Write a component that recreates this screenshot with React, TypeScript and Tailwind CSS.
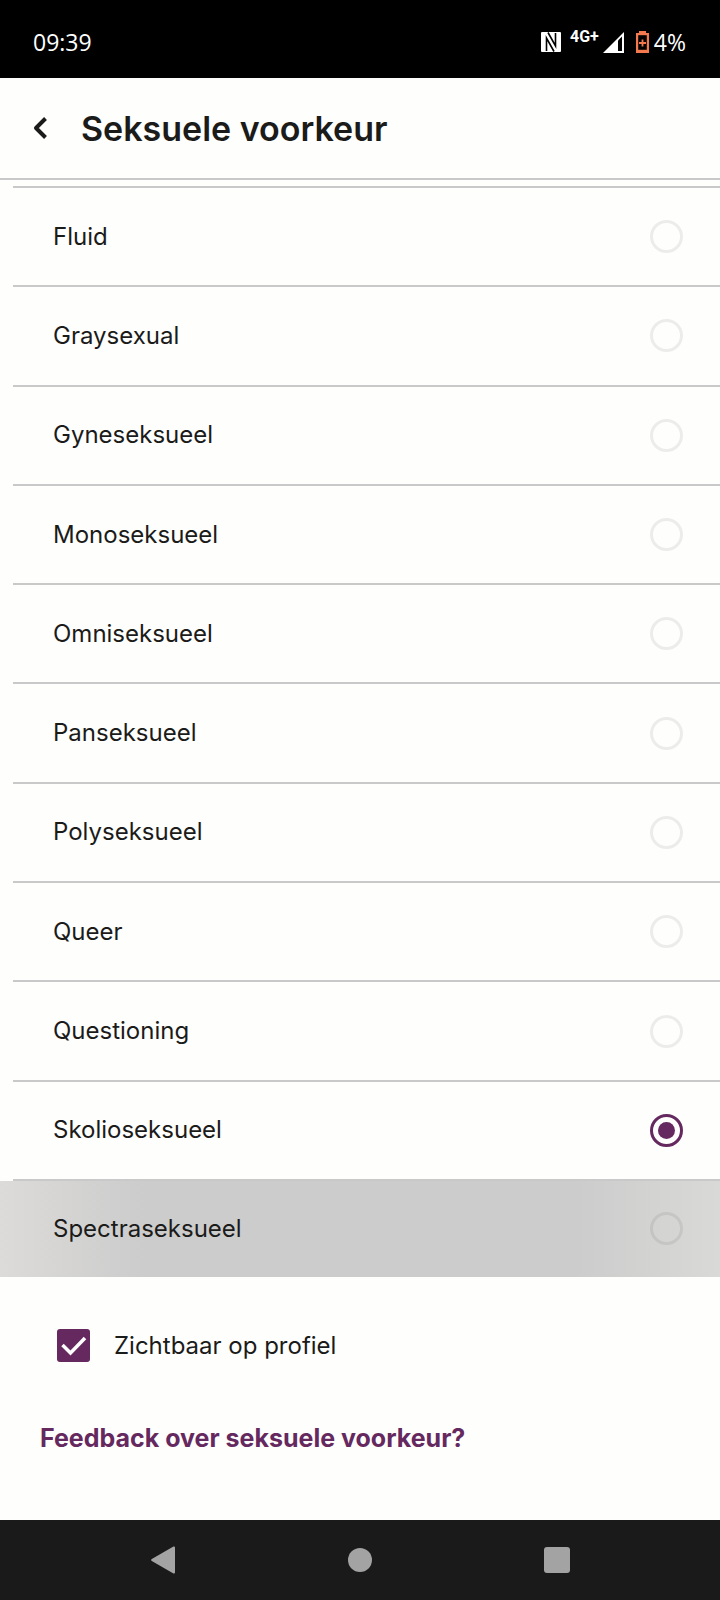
import { useState } from "react";

const options = [
  "Fluid",
  "Graysexual",
  "Gyneseksueel",
  "Monoseksueel",
  "Omniseksueel",
  "Panseksueel",
  "Polyseksueel",
  "Queer",
  "Questioning",
  "Skolioseksueel",
  "Spectraseksueel",
];

// row that still shows the touch ripple
const pressed = "Spectraseksueel";

function StatusBar() {
  return (
    <div className="h-[78px] shrink-0 bg-black text-white flex items-center justify-between pl-[33px] pr-[34px] pt-[6px] font-['Open_Sans',sans-serif] text-[23px] leading-8">
      <time>09:39</time>
      <div className="flex items-center">
        <svg className="w-5 h-5" viewBox="0 0 20 20" role="img" aria-label="NFC">
          <rect width="20" height="20" rx="1" fill="#fff" />
          <path d="M5.500 19V6l7.500 13.500M14.500 1v13L7 .5" fill="none" stroke="#000" strokeWidth="1.600" />
        </svg>
        <span className="ml-[9px] mb-[10px] font-[Roboto,sans-serif] text-base leading-5 font-bold">4G+</span>
        <svg className="ml-1 w-[21px] h-[21px]" viewBox="0 0 21 21" role="img" aria-label="Signal">
          <path d="M0 21L21 0v21z" fill="#fff" />
          <path d="M15 8.500l4-4V19h-4z" fill="#000" />
        </svg>
        <svg className="ml-3 w-[13px] h-[22px]" viewBox="0 0 13 22" role="img" aria-label="Battery low">
          <path d="M3 0h7v2h3v20H0V2h3z" fill="#f4794f" />
          <path d="M2.200 4.200h8.600v14.600H2.200z" fill="#000" />
          <path d="M5.600 8.500h1.800v2.600H10v1.800H7.400v2.600H5.600v-2.600H3v-1.800h2.600z" fill="#f4794f" />
        </svg>
        <span className="ml-[5px]">4%</span>
      </div>
    </div>
  );
}

function NavBar() {
  return (
    <nav className="h-20 shrink-0 bg-[#1a1a1a] px-16 flex items-center justify-around text-[#a3a3a3]">
      <button type="button" aria-label="Terug" className="size-12 grid place-items-center">
        <svg className="w-6 h-7" viewBox="0 0 24 28" fill="currentColor">
          <path d="M22 .7c1-.6 2 0 2 1v24.600c0 1-1 1.600-2 1L.8 15c-.9-.5-.9-1.500 0-2z" />
        </svg>
      </button>
      <button type="button" aria-label="Startscherm" className="size-12 grid place-items-center">
        <span className="size-6 rounded-full bg-current" />
      </button>
      <button type="button" aria-label="Overzicht" className="size-12 grid place-items-center">
        <span className="size-[26px] rounded-[3px] bg-current" />
      </button>
    </nav>
  );
}

export default function App() {
  const [selected, setSelected] = useState("Skolioseksueel");
  const [visible, setVisible] = useState(true);

  return (
    <div className="min-h-screen flex flex-col bg-[#fefefd] text-[#1b1b1a] font-[Inter,sans-serif] text-2xl">
      <StatusBar />

      <header className="h-[102px] shrink-0 border-b-2 border-[#c9c9c9] flex items-center pl-[33px]">
        <button type="button" aria-label="Terug">
          <svg className="w-4 h-[22px]" viewBox="0 0 16 22" fill="none" stroke="currentColor" strokeWidth="4">
            <path d="M12.500 1.500L3 11l9.500 9.500" strokeLinejoin="round" />
          </svg>
        </button>
        <h1 className="ml-8 pt-[2px] text-[34px] leading-10 font-semibold">Seksuele voorkeur</h1>
      </header>

      <main className="flex-1 flex flex-col">
        <ul className="flex-1 flex flex-col pt-[6px]" role="radiogroup" aria-label="Seksuele voorkeur">
          {options.map((option) => (
            <li key={option} className="flex-1 last:flex-none min-h-[98px] flex flex-col">
              <div className="h-[2px] shrink-0 bg-[#c9c9c9] ml-[13px]" />
              <label
                className={`flex-1 flex items-center justify-between pl-[53px] pr-[37px] ${
                  option === pressed
                    ? "bg-[linear-gradient(to_right,#dcdbd9,#cccccc_20%,#cccccc_80%,#d9d9d7)]"
                    : ""
                }`}
              >
                {option}
                <input
                  type="radio"
                  name="voorkeur"
                  checked={selected === option}
                  onChange={() => setSelected(option)}
                  className="appearance-none size-[33px] shrink-0 rounded-full border-[3px] border-black/7 grid place-content-center checked:border-[#65295f] before:content-[''] before:size-[17px] before:rounded-full checked:before:bg-[#65295f]"
                />
              </label>
            </li>
          ))}
        </ul>

        <div className="shrink-0 h-[243px] pt-[52px] flex flex-col items-start">
          <label className="ml-[57px] flex items-center gap-6">
            <span className="grid size-[33px]">
              <input
                type="checkbox"
                checked={visible}
                onChange={(e) => setVisible(e.target.checked)}
                className="appearance-none col-start-1 row-start-1 rounded-[3px] border-[3px] border-[#65295f] checked:bg-[#65295f]"
              />
              {visible && (
                <svg className="col-start-1 row-start-1 pointer-events-none" viewBox="0 0 33 33" fill="none" stroke="#fff" strokeWidth="3.500">
                  <path d="M5.500 16l8 8L28 9" />
                </svg>
              )}
            </span>
            Zichtbaar op profiel
          </label>
          <a href="#feedback" className="ml-10 mt-[60px] text-[25px] leading-8 font-bold text-[#65295f]">
            Feedback over seksuele voorkeur?
          </a>
        </div>
      </main>

      <NavBar />
    </div>
  );
}
